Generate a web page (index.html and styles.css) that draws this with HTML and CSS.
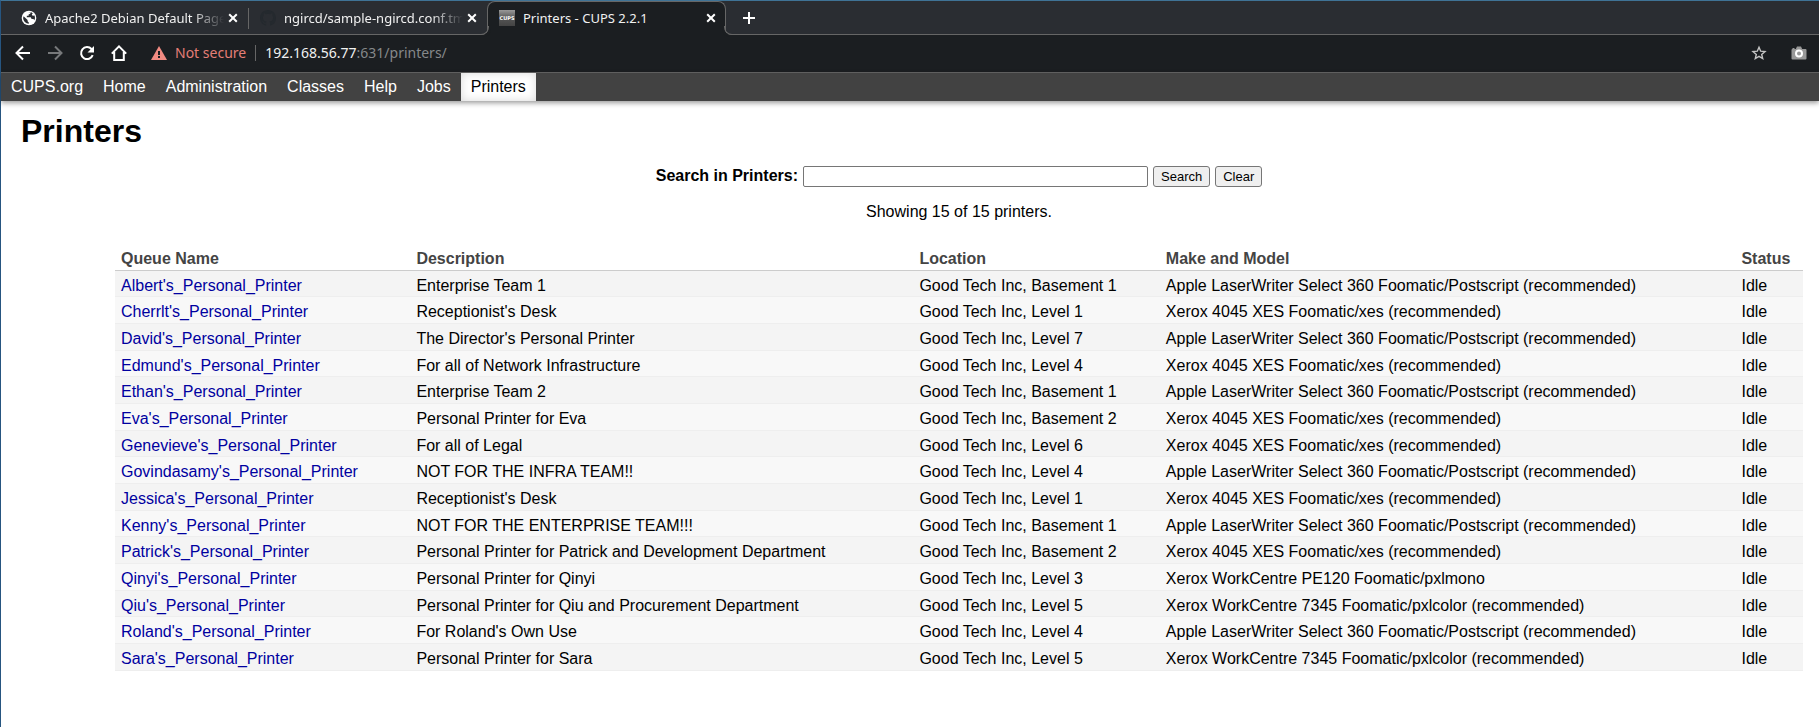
FILE: index.html
```html
<!DOCTYPE html>
<html lang="en">
<head>
<meta charset="utf-8">
<title>Printers - CUPS 2.2.1</title>
<link rel="stylesheet" href="styles.css">
</head>
<body>
<div class="window">
  <div class="tabs">
    <div class="tab">
      <svg class="favicon" viewBox="0 0 16 16" aria-hidden="true"><circle cx="8" cy="8" r="7.3" fill="#fff"/><path d="M2.6 6.2 6.6 10v1.2l1.2 1.2v1.4A5.9 5.9 0 0 1 2.1 8zM7.2 2.2h2.6l-.6 1.6-1.6.8v1.2H5.8v1.4h4l.8 1.8h1.8l1 1.2a6 6 0 0 0 .2-4.6l-2 .2-.8-1.4 1-1.2A6 6 0 0 0 7.2 2.2z" fill="#2a2d32"/></svg>
      <span class="tab-title fade">Apache2 Debian Default Page</span>
      <button class="close" aria-label="Close tab"><svg viewBox="0 0 10 10"><path d="M1.2 1.2l7.6 7.6M8.8 1.2 1.2 8.8"/></svg></button>
    </div>
    <div class="tab divided">
      <svg class="favicon" viewBox="0 0 16 16" aria-hidden="true"><path fill="#24292e" d="M8 0C3.58 0 0 3.58 0 8c0 3.54 2.29 6.53 5.47 7.59.4.07.55-.17.55-.38v-1.49c-2.01.37-2.53-.49-2.69-.94-.09-.23-.48-.94-.82-1.13-.28-.15-.68-.52-.01-.53.63-.01 1.08.58 1.23.82.72 1.21 1.87.87 2.33.66.07-.52.28-.87.51-1.07-1.78-.2-3.64-.89-3.64-3.95 0-.87.31-1.59.82-2.15-.08-.2-.36-1.02.08-2.12 0 0 .67-.21 2.2.82a7.6 7.6 0 0 1 4 0c1.53-1.04 2.2-.82 2.2-.82.44 1.1.16 1.92.08 2.12.51.56.82 1.27.82 2.15 0 3.07-1.87 3.75-3.65 3.95.29.25.54.73.54 1.48v2.2c0 .21.15.46.55.38A8 8 0 0 0 16 8c0-4.42-3.58-8-8-8z"/></svg>
      <span class="tab-title fade">ngircd/sample-ngircd.conf.tm</span>
      <button class="close" aria-label="Close tab"><svg viewBox="0 0 10 10"><path d="M1.2 1.2l7.6 7.6M8.8 1.2 1.2 8.8"/></svg></button>
    </div>
    <div class="tab active">
      <svg class="favicon" viewBox="0 0 16 16" aria-hidden="true"><defs><linearGradient id="g" x2="0" y2="1"><stop offset="0" stop-color="#999"/><stop offset=".5" stop-color="#555"/><stop offset="1" stop-color="#444"/></linearGradient></defs><path fill="url(#g)" d="M0 0h16v16H0z"/><text x="8" y="10" class="cups">CUPS</text></svg>
      <span class="tab-title">Printers - CUPS 2.2.1</span>
      <button class="close" aria-label="Close tab"><svg viewBox="0 0 10 10"><path d="M1.2 1.2l7.6 7.6M8.8 1.2 1.2 8.8"/></svg></button>
    </div>
    <div class="rest"><button class="new-tab" aria-label="New tab"><svg viewBox="0 0 12 12"><path d="M6 0v12M0 6h12"/></svg></button></div>
  </div>
  <div class="toolbar">
    <button class="tool" aria-label="Back"><svg viewBox="0 0 16 16"><path d="M15 8H2M8 1.5 1.5 8 8 14.5"/></svg></button>
    <button class="tool off" aria-label="Forward" disabled><svg viewBox="0 0 16 16"><path d="M1 8h13M8 1.5 14.5 8 8 14.5"/></svg></button>
    <button class="tool" aria-label="Reload"><svg viewBox="0 0 16 16"><path d="M13.7 10.2A6 6 0 1 1 12.5 4L14 5.5"/><path class="solid" d="M15 1v6.5H8.5z"/></svg></button>
    <button class="tool" aria-label="Home"><svg viewBox="0 0 16 16"><path d="M.8 8.6 8 1.4l7.2 7.2M3.2 7v8h9.6V7"/></svg></button>
    <div class="address">
      <svg class="warning" viewBox="0 0 16 14" aria-hidden="true"><path fill="#f28b82" d="M8 0l8 14H0z"/><path fill="#1b1e21" d="M7 5h2v4H7zM7 10h2v2H7z"/></svg>
      <span class="insecure">Not secure</span>
      <span class="url"><span class="host">192.168.56.77</span>:631/printers/</span>
    </div>
    <button class="tool star" aria-label="Bookmark"><svg viewBox="0 0 16 16"><path d="M8 2.2l1.7 4 4.3.4-3.3 2.8 1 4.2L8 11.4l-3.7 2.2 1-4.2L2 6.6l4.3-.4z"/></svg></button>
    <button class="tool camera" aria-label="Capture"><svg viewBox="0 0 16 16"><path fill="#999" d="M1.5 4V3h2v1h1.3L6 1.5h4L11.2 4h3.3a1 1 0 0 1 1 1v8.500a1 1 0 0 1-1 1h-13a1 1 0 0 1-1-1V5a1 1 0 0 1 1-1z"/><circle cx="8" cy="8.5" r="3" fill="#999" stroke="#fff"/></svg></button>
  </div>
  <nav class="nav">
    <a href="#">CUPS.org</a><a href="#">Home</a><a href="#">Administration</a><a href="#">Classes</a><a href="#">Help</a><a href="#">Jobs</a><a href="#" class="current">Printers</a>
  </nav>
  <main class="page">
    <h1>Printers</h1>
    <div class="content">
      <form class="search">
        <label for="q">Search in Printers:</label>
        <input id="q" type="text">
        <button type="button">Search</button>
        <button type="button">Clear</button>
      </form>
      <p class="count">Showing 15 of 15 printers.</p>
      <table class="list">
        <colgroup><col class="c-name"><col class="c-desc"><col class="c-loc"><col class="c-model"><col></colgroup>
        <thead><tr><th>Queue Name</th><th>Description</th><th>Location</th><th>Make and Model</th><th>Status</th></tr></thead>
        <tbody>
          <tr><td><a href="#">Albert's_Personal_Printer</a></td><td>Enterprise Team 1</td><td>Good Tech Inc, Basement 1</td><td>Apple LaserWriter Select 360 Foomatic/Postscript (recommended)</td><td>Idle</td></tr>
          <tr><td><a href="#">Cherrlt's_Personal_Printer</a></td><td>Receptionist's Desk</td><td>Good Tech Inc, Level 1</td><td>Xerox 4045 XES Foomatic/xes (recommended)</td><td>Idle</td></tr>
          <tr><td><a href="#">David's_Personal_Printer</a></td><td>The Director's Personal Printer</td><td>Good Tech Inc, Level 7</td><td>Apple LaserWriter Select 360 Foomatic/Postscript (recommended)</td><td>Idle</td></tr>
          <tr><td><a href="#">Edmund's_Personal_Printer</a></td><td>For all of Network Infrastructure</td><td>Good Tech Inc, Level 4</td><td>Xerox 4045 XES Foomatic/xes (recommended)</td><td>Idle</td></tr>
          <tr><td><a href="#">Ethan's_Personal_Printer</a></td><td>Enterprise Team 2</td><td>Good Tech Inc, Basement 1</td><td>Apple LaserWriter Select 360 Foomatic/Postscript (recommended)</td><td>Idle</td></tr>
          <tr><td><a href="#">Eva's_Personal_Printer</a></td><td>Personal Printer for Eva</td><td>Good Tech Inc, Basement 2</td><td>Xerox 4045 XES Foomatic/xes (recommended)</td><td>Idle</td></tr>
          <tr><td><a href="#">Genevieve's_Personal_Printer</a></td><td>For all of Legal</td><td>Good Tech Inc, Level 6</td><td>Xerox 4045 XES Foomatic/xes (recommended)</td><td>Idle</td></tr>
          <tr><td><a href="#">Govindasamy's_Personal_Printer</a></td><td>NOT FOR THE INFRA TEAM!!</td><td>Good Tech Inc, Level 4</td><td>Apple LaserWriter Select 360 Foomatic/Postscript (recommended)</td><td>Idle</td></tr>
          <tr><td><a href="#">Jessica's_Personal_Printer</a></td><td>Receptionist's Desk</td><td>Good Tech Inc, Level 1</td><td>Xerox 4045 XES Foomatic/xes (recommended)</td><td>Idle</td></tr>
          <tr><td><a href="#">Kenny's_Personal_Printer</a></td><td>NOT FOR THE ENTERPRISE TEAM!!!</td><td>Good Tech Inc, Basement 1</td><td>Apple LaserWriter Select 360 Foomatic/Postscript (recommended)</td><td>Idle</td></tr>
          <tr><td><a href="#">Patrick's_Personal_Printer</a></td><td>Personal Printer for Patrick and Development Department</td><td>Good Tech Inc, Basement 2</td><td>Xerox 4045 XES Foomatic/xes (recommended)</td><td>Idle</td></tr>
          <tr><td><a href="#">Qinyi's_Personal_Printer</a></td><td>Personal Printer for Qinyi</td><td>Good Tech Inc, Level 3</td><td>Xerox WorkCentre PE120 Foomatic/pxlmono</td><td>Idle</td></tr>
          <tr><td><a href="#">Qiu's_Personal_Printer</a></td><td>Personal Printer for Qiu and Procurement Department</td><td>Good Tech Inc, Level 5</td><td>Xerox WorkCentre 7345 Foomatic/pxlcolor (recommended)</td><td>Idle</td></tr>
          <tr><td><a href="#">Roland's_Personal_Printer</a></td><td>For Roland's Own Use</td><td>Good Tech Inc, Level 4</td><td>Apple LaserWriter Select 360 Foomatic/Postscript (recommended)</td><td>Idle</td></tr>
          <tr><td><a href="#">Sara's_Personal_Printer</a></td><td>Personal Printer for Sara</td><td>Good Tech Inc, Level 5</td><td>Xerox WorkCentre 7345 Foomatic/pxlcolor (recommended)</td><td>Idle</td></tr>
        </tbody>
      </table>
    </div>
  </main>
</div>
</body>
</html>
```
FILE: styles.css
```css
* { box-sizing: border-box; }
body { margin: 0; background: #fff; color: #000; font: 16px "Liberation Sans", Arial, sans-serif; }
svg { display: block; fill: none; }
.window { min-height: 100vh; border-top: 1px solid #3f7396; border-left: 1px solid #265580; }

.tabs, .toolbar { font-family: "Noto Sans", sans-serif; color: #f1f1f1; }
.tabs { display: flex; height: 34px; background: #2a2d32; font-size: 13px; }
.tabs::before { content: ""; width: 8px; border-bottom: 1px solid #666; }
.tabs button, .tool { border: 0; padding: 0; background: none; color: #fff; }
.tab { position: relative; display: flex; align-items: center; width: 239px; padding: 0 10px 0 12px; border-bottom: 1px solid #666; }
.divided::before { content: ""; position: absolute; left: 0; top: 7px; height: 21px; border-left: 1px solid #666; }
.favicon { flex: none; width: 16px; height: 16px; margin-right: 8px; }
.tab-title { flex: 1; overflow: hidden; white-space: nowrap; }
.fade { mask-image: linear-gradient(to left, transparent, #000 32px); }
.close svg { width: 10px; height: 10px; margin-left: 4px; stroke: #fff; stroke-width: 2; }
.tab.active { padding: 0 9px 1px 11px; border: 1px solid #666; border-bottom: 0; border-radius: 8px 8px 0 0; background: #1b1e21; }
/* outward curves at the foot of the open tab */
.active::before, .active::after { content: ""; position: absolute; bottom: 0; width: 8px; height: 8px; border-bottom: 1px solid #666; }
.active::before { left: -8px; border-right: 1px solid #666; border-bottom-right-radius: 8px; box-shadow: 2px 2px #1b1e21; }
.active::after { right: -8px; border-left: 1px solid #666; border-bottom-left-radius: 8px; box-shadow: -2px 2px #1b1e21; }
.cups { font: bold 5px "DejaVu Sans", sans-serif; fill: #fff; text-anchor: middle; }
.rest { flex: 1; display: flex; align-items: center; padding-left: 17px; border-bottom: 1px solid #666; }
.new-tab svg { width: 12px; height: 12px; stroke: #fff; stroke-width: 2; }

.toolbar { display: flex; align-items: center; gap: 16px; height: 38px; padding: 0 12px 2px 14px; border-bottom: 1px solid #666; background: #1b1e21; font-size: 14px; }
.tool svg { width: 16px; height: 16px; stroke: currentColor; stroke-width: 2; }
.tool.off { color: #77797b; }
.tool .solid { fill: currentColor; stroke: none; }
.star { margin-right: 8px; }
.star svg { stroke: #c4c4c4; stroke-width: 1.4; }
.camera svg { stroke: none; stroke-width: 2; }
.address { flex: 1; display: flex; align-items: center; padding-left: 8px; }
.warning { width: 16px; height: 14px; margin-right: 8px; }
.insecure { color: #e57f77; padding-right: 9px; border-right: 1px solid #666; line-height: 16px; }
.url { padding-left: 9px; color: #85888a; }
.host { color: #f1f1f1; }

.nav { display: flex; background: #424242; box-shadow: 0 2px 5px rgba(0, 0, 0, .4); }
.nav a { padding: 0 10px; line-height: 28px; color: #fff; text-decoration: none; }
.nav .current { background: #fff; color: #000; box-shadow: inset 0 0 10px rgba(0, 0, 0, .15); }

.page { padding: 12px 16px 0 20px; }
h1 { margin: 0; font-size: 32px; line-height: 36px; }
.content { padding-left: 94px; }
.search { display: flex; justify-content: center; align-items: flex-start; gap: 5px; margin-top: 17px; }
.search label { font-weight: bold; line-height: 20px; }
.search input { width: 345px; height: 21px; border: 1px solid #767676; border-radius: 2px; }
.search button { height: 21px; padding: 0 7px; border: 1px solid #767676; border-radius: 3px; background: #efefef; color: #000; font: 13px "Liberation Sans", Arial, sans-serif; }
.count { margin: 16px 0 24px; text-align: center; line-height: 18px; }
.list { width: 100%; border-collapse: collapse; line-height: 1.355; }
.c-name { width: 17.5%; }
.c-desc { width: 29.8%; }
.c-loc { width: 14.6%; }
.c-model { width: 34.1%; }
.list th, .list td { padding: 4px 6px 0; text-align: left; }
.list th { padding-top: 3px; border-bottom: 1px solid #ccc; color: #444; }
.list td { border-bottom: 1px solid #eee; }
.list tbody tr { background: #f8f8f8; }
.list tbody tr:nth-child(odd) { background: #f4f4f4; }
.list a { color: #0000a0; text-decoration: none; }
```
